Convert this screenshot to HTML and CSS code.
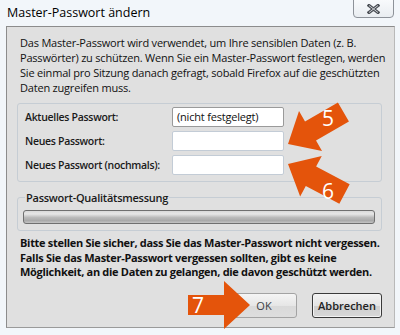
FILE: index.html
```html
<!DOCTYPE html>
<html lang="de">
<head>
    <meta charset="UTF-8">
    <title>Master-Passwort ändern</title>
    <link rel="stylesheet" href="styles.css">
</head>
<body>
    <div class="window">
        <div class="titlebar">
            <span class="title">Master-Passwort ändern</span>
            <button class="close-button" aria-label="Schließen">
                <svg width="13" height="10" viewBox="0 0 13 10">
                    <path d="M2 1.5 L11 8.5 M11 1.5 L2 8.5" stroke="#4b4f55" stroke-width="3.2" stroke-linecap="square"/>
                    <path d="M2 1.5 L11 8.5 M11 1.5 L2 8.5" stroke="#c9ccd1" stroke-width="1"/>
                </svg>
            </button>
        </div>

        <div class="panel">
            <p class="intro">
                Das Master-Passwort wird verwendet, um Ihre sensiblen Daten (z. B.<br>
                Passwörter) zu schützen. Wenn Sie ein Master-Passwort festlegen, werden<br>
                Sie einmal pro Sitzung danach gefragt, sobald Firefox auf die geschützten<br>
                Daten zugreifen muss.
            </p>

            <div class="fields">
                <label class="field-label">Aktuelles Passwort:</label>
                <div class="field-input current">(nicht festgelegt)</div>
                <label class="field-label">Neues Passwort:</label>
                <div class="field-input"></div>
                <label class="field-label">Neues Passwort (nochmals):</label>
                <div class="field-input"></div>
            </div>

            <fieldset class="quality">
                <legend>Passwort-Qualitätsmessung</legend>
                <div class="meter"></div>
            </fieldset>

            <p class="warning">
                Bitte stellen Sie sicher, dass Sie das Master-Passwort nicht vergessen.<br>
                Falls Sie das Master-Passwort vergessen sollten, gibt es keine<br>
                Möglichkeit, an die Daten zu gelangen, die davon geschützt werden.
            </p>

            <div class="buttons">
                <button class="btn ok">OK</button>
                <button class="btn cancel">Abbrechen</button>
            </div>
        </div>

        <!-- step markers drawn over the dialog -->
        <svg class="markers" width="400" height="335" viewBox="0 0 400 335">
            <g fill="#e4540b">
                <polygon points="0,0 -26,-23 -26,-11 -64,-11 -64,11 -26,11 -26,23" transform="translate(288,144) rotate(150)"/>
                <polygon points="0,0 -26,-23 -26,-11 -64,-11 -64,11 -26,11 -26,23" transform="translate(288,164) rotate(-152)"/>
                <polygon points="0,0 -26,-24 -26,-10 -62,-10 -62,10 -26,10 -26,24" transform="translate(250,305)"/>
            </g>
            <g class="marker-num">
                <text x="322" y="126">5</text>
                <text x="322" y="199">6</text>
                <text x="192" y="313">7</text>
            </g>
        </svg>
    </div>
</body>
</html>
```

FILE: styles.css
```css
body {
    margin: 0;
    font-family: 'Open Sans', 'Noto Sans', sans-serif;
    background: #f2f6fa;
}

.window {
    position: relative;
    width: 400px;
    height: 335px;
    overflow: hidden;
}

.titlebar {
    display: flex;
    justify-content: space-between;
    height: 26px;
}

.title {
    padding: 4px 0 0 7px;
    font-size: 12.5px;
    color: #000;
}

.close-button {
    display: flex;
    align-items: center;
    justify-content: center;
    width: 41px;
    height: 19px;
    margin: -1px 6px 0 0;
    padding: 0;
    border: 1px solid #8d9299;
    border-radius: 0 0 4px 4px;
    background: linear-gradient(#f8fafc, #e9edf1);
}

.panel {
    height: 300px;
    margin: 0 5px 0 6px;
    border: 1px solid #8c8c8c;
    border-right-color: #b9b9b9;
    border-bottom-color: #9a9a9a;
    background: #e0e0e0;
}

.intro {
    margin: 0;
    padding: 8px 0 0 13px;
    font-size: 11px;
    letter-spacing: -0.2px;
    line-height: 15px;
    white-space: nowrap;
    color: #111;
}

.fields {
    display: grid;
    grid-template-columns: 147px 112px;
    row-gap: 4px;
    align-items: center;
    margin: 8px 12px 0 10px;
    padding: 3px 0 6px 7px;
    border: 1px solid #c6cdd4;
    border-radius: 3px;
}

.field-label {
    font-size: 10.5px;
    font-weight: 600;
    letter-spacing: -0.3px;
    white-space: nowrap;
    color: #1a1a1a;
}

.field-input {
    box-sizing: border-box;
    height: 20px;
    padding: 1px 4px;
    border: 1px solid #c3ccd6;
    border-radius: 2px;
    background: #fff;
    font-size: 11px;
    letter-spacing: -0.2px;
    line-height: 16px;
    white-space: nowrap;
    color: #111;
}

.field-input.current {
    border-color: #9a9a9a;
}

.quality {
    margin: 8px 12px 0 10px;
    padding: 5px 6px 6px 5px;
    border: 1px solid #c6cdd4;
    border-radius: 3px;
}

.quality legend {
    margin-left: 2px;
    padding: 0 1px;
    font-size: 11px;
    font-weight: 600;
    letter-spacing: -0.25px;
    line-height: 15px;
    color: #1a1a1a;
}

.meter {
    height: 12px;
    border: 1px solid #6f6f6f;
    border-radius: 3px;
    background: linear-gradient(#d9d9d9, #e6e6e6 25%, #b9b9b9 55%, #a9a9a9 80%, #c4c4c4);
}

.warning {
    margin: 5px 0 0 13px;
    font-size: 11px;
    font-weight: 700;
    letter-spacing: -0.3px;
    line-height: 14.5px;
    white-space: nowrap;
    color: #111;
}

.buttons {
    display: flex;
    justify-content: flex-end;
    gap: 15px;
    margin: 13px 12px 0 0;
}

.btn {
    height: 25px;
    padding: 0;
    border-radius: 3px;
    font-family: inherit;
    font-size: 11px;
    color: #222;
}

.ok {
    width: 66px;
    border: 1px solid #a3a3a3;
    background: linear-gradient(#f5f5f5, #e6e6e6 50%, #d9d9d9 52%, #dedede);
    color: #3c3f44;
}

.cancel {
    width: 70px;
    border: 1px solid #3a3a3a;
    box-shadow: inset 0 0 0 1px #f3f3f3;
    background: linear-gradient(#f2f2f2, #e4e4e4 50%, #cfcfcf 52%, #d8d8d8);
    font-weight: 600;
}

.markers {
    position: absolute;
    top: 0;
    left: 0;
    pointer-events: none;
}

.marker-num {
    font-family: 'Open Sans', sans-serif;
    font-size: 21px;
    fill: #fff;
}
```
